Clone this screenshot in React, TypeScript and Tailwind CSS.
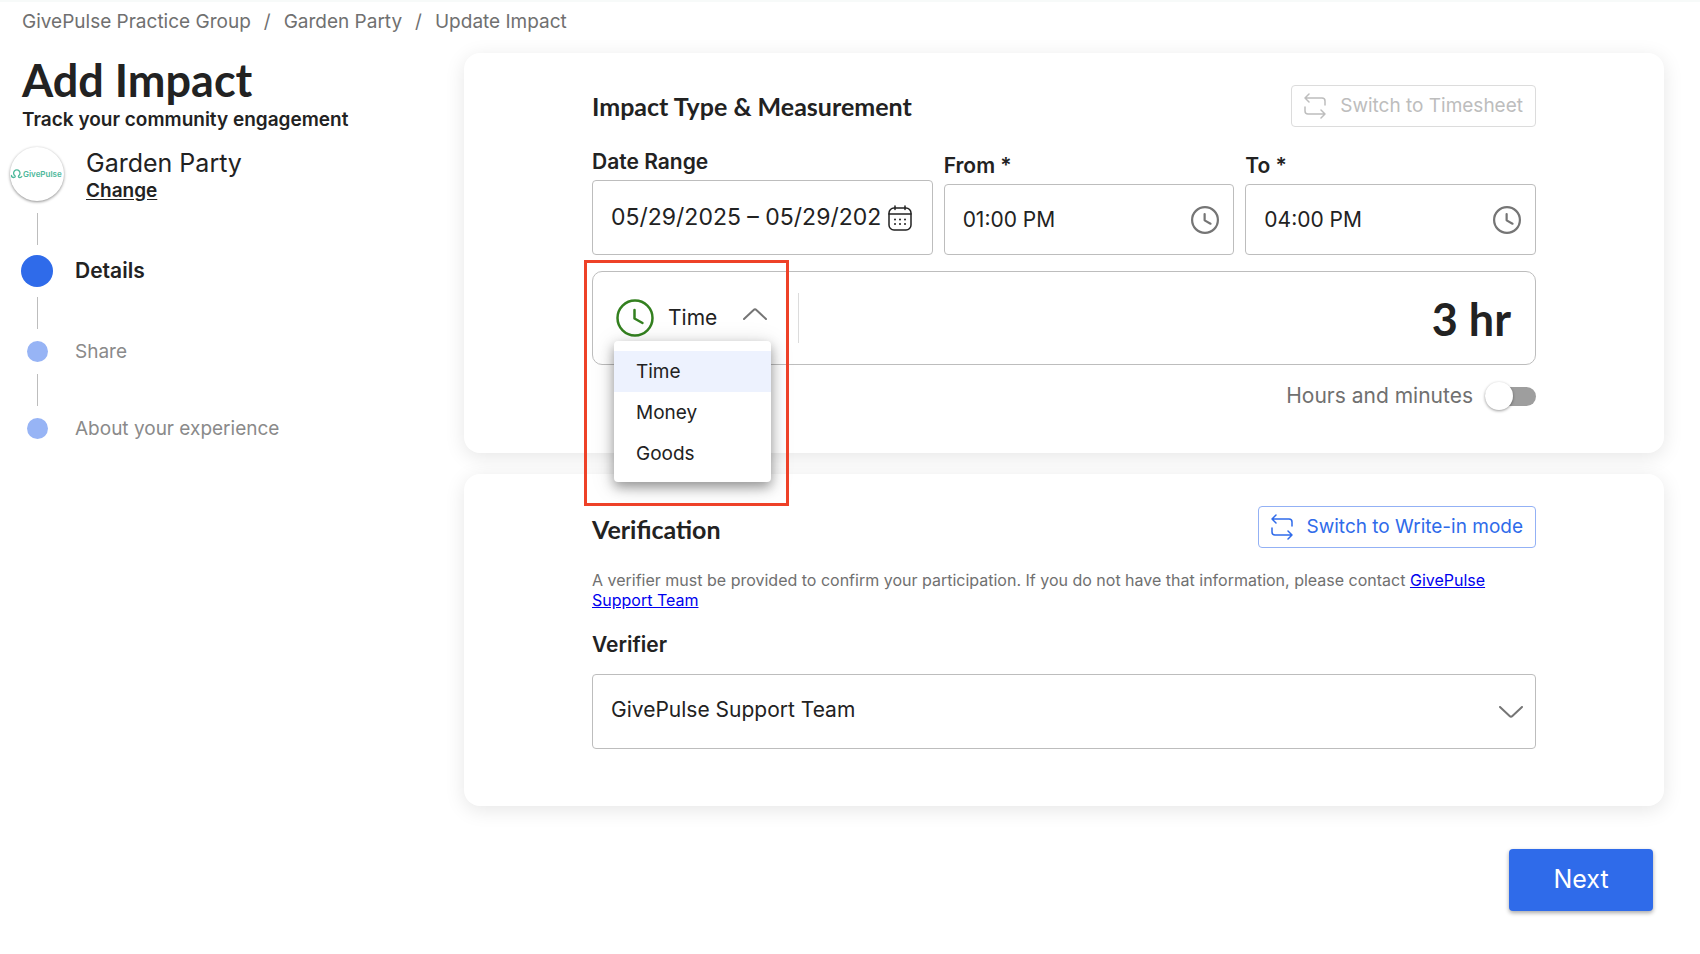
import { useState } from "react";
import type { ReactNode } from "react";
import clsx from "clsx";

const impactTypes = ["Time", "Money", "Goods"];

const steps = [
    { label: "Details", active: true },
    { label: "Share", active: false },
    { label: "About your experience", active: false },
];

function SwapIcon() {
    return (
        <svg width="22" height="26" viewBox="0 0 22 26" fill="none" stroke="currentColor" strokeWidth="1.5" strokeLinecap="round" strokeLinejoin="round">
            <path d="M5 1 1 5l4 4M1 5h17a3 3 0 0 1 3 3v4" />
            <path d="m17 17 4 4-4 4M21 21H4a3 3 0 0 1-3-3v-4" />
        </svg>
    );
}

function ClockIcon({ className, stroke }: { className: string; stroke: number }) {
    return (
        <svg className={className} viewBox="0 0 38 38" fill="none" stroke="currentColor" strokeWidth={stroke} strokeLinecap="round" strokeLinejoin="round">
            <circle cx="19" cy="19" r="17.500" />
            <path d="M18.500 11v8.500l8 4.500" />
        </svg>
    );
}

function CalendarIcon() {
    return (
        <svg width="24" height="26" viewBox="0 0 24 26" fill="none" stroke="currentColor" strokeWidth="1.500" strokeLinecap="round">
            <rect x="1" y="3" width="22" height="22" rx="5" />
            <path d="M1 9h22M7 1v3.500M17 1v3.500" />
            <path d="M7 14.500h.01M12 14.500h.01M17 14.500h.01M7 19h.01M12 19h.01M17 19h.01" strokeWidth="2" />
        </svg>
    );
}

function Chevron({ up = false }: { up?: boolean }) {
    return (
        <svg width="24" height="12" viewBox="0 0 24 12" fill="none" stroke="currentColor" strokeWidth="2" strokeLinecap="round" className={up ? "rotate-180" : ""}>
            <path d="m1 1 9.600 9a2 2 0 0 0 2.800 0L23 1" />
        </svg>
    );
}

function GroupLogo() {
    return (
        <svg width="54" height="54" viewBox="0 0 54 54" role="img" aria-label="GivePulse">
            <path d="M1.500 28.500c0 1.600 1.200 2 2.300 2 1.400 0 1.700-.8 1.200-1.700a3.200 3.200 0 1 1 3.600 0c-.5 1 0 1.700 1.200 1.700 1 0 1.700-.4 2-1" fill="none" stroke="#4db89b" strokeWidth="1.300" strokeLinecap="round" />
            <text x="13" y="30" fontSize="8" fontWeight="600" fill="#4db89b">GivePulse</text>
        </svg>
    );
}

function Card({ children, className }: { children: ReactNode; className: string }) {
    return (
        <section className={clsx("rounded-2xl bg-white px-32 shadow-[0_4px_20px_rgba(0,0,0,0.1)]", className)}>
            {children}
        </section>
    );
}

function SwitchButton({ children, disabled = false }: { children: ReactNode; disabled?: boolean }) {
    return (
        <button
            type="button"
            disabled={disabled}
            className={clsx(
                "flex h-[42px] items-center gap-3.5 rounded border px-3 text-[19px]",
                disabled ? "border-[#dcdcdc] text-[#bdbdbd]" : "border-[#93b1f5] text-[#2f6bea]"
            )}
        >
            <SwapIcon />
            {children}
        </button>
    );
}

function TimeField({ id, label, value }: { id: string; label: string; value: string }) {
    return (
        <div className="min-w-0 flex-[291]">
            <label htmlFor={id} className="block pb-1 text-[21px] font-semibold leading-7">{label} *</label>
            <div className="flex h-[71px] items-center rounded border border-[#bdbdbd] pl-[18px] pr-3.5">
                <input id={id} defaultValue={value} className="min-w-0 flex-1 text-[21px] outline-none" />
                <button type="button" aria-label={"Choose time: " + label} className="text-[#757575]">
                    <ClockIcon className="size-7" stroke={3} />
                </button>
            </div>
        </div>
    );
}

function Sidebar() {
    return (
        <aside className="w-[464px] shrink-0">
            <h1 className="pl-[22px] font-['Lato'] text-[45px] font-bold leading-[55px]">Add Impact</h1>
            <p className="pl-[22px] text-[19px] font-semibold leading-6">Track your community engagement</p>

            <div className="flex gap-[22px] pl-2.5 pt-[15px]">
                <div className="size-[54px] shrink-0 overflow-hidden rounded-full bg-white shadow-[0_1px_3px_rgba(0,0,0,0.45)]">
                    <GroupLogo />
                </div>
                <div>
                    <p className="text-[25px] leading-8">Garden Party</p>
                    <a href="#" className="block text-[19px] font-semibold leading-6 underline underline-offset-2">Change</a>
                </div>
            </div>

            <ol className="pl-[21px]">
                {steps.map((step) => (
                    <li key={step.label}>
                        <div className="my-2.5 ml-4 h-8 w-px bg-[#bdbdbd]" />
                        <div className="flex items-center gap-[22px]">
                            <span className={clsx("flex w-8 items-center justify-center", step.active ? "h-8" : "h-[25px]")}>
                                <span className={clsx("rounded-full", step.active ? "size-8 bg-[#2f6bea]" : "size-[21px] bg-[#97b4f5]")} />
                            </span>
                            <span className={clsx("leading-6", step.active ? "text-[21px] font-semibold" : "text-[19px] text-[#8a8a8a]")}>{step.label}</span>
                        </div>
                    </li>
                ))}
            </ol>
        </aside>
    );
}

export default function App() {
    const [type, setType] = useState("Time");

    return (
        <div className="bg-white font-['Inter',sans-serif] text-[#222]">
            <nav aria-label="Breadcrumb" className="border-t-2 border-[#f7faf9] pl-[22px] pt-2">
                <ol className="flex gap-[13px] text-[19px] leading-6 text-[#707070]">
                    <li><a href="#">GivePulse Practice Group</a></li>
                    <li aria-hidden="true">/</li>
                    <li><a href="#">Garden Party</a></li>
                    <li aria-hidden="true">/</li>
                    <li>Update Impact</li>
                </ol>
            </nav>

            <div className="flex pt-[19px] pr-9">
                <Sidebar />

                <main className="min-w-0 flex-1">
                    <Card className="pt-8 pb-10">
                        <div className="flex items-center justify-between">
                            <h2 className="font-['Lato'] text-[25px] font-bold leading-8">Impact Type &amp; Measurement</h2>
                            <SwitchButton disabled>Switch to Timesheet</SwitchButton>
                        </div>

                        <div className="flex items-end gap-[11px] pt-[21px]">
                            <div className="min-w-0 flex-[341]">
                                <label htmlFor="dates" className="block pb-1 text-[21px] font-semibold leading-7">Date Range</label>
                                <div className="flex h-[75px] items-center gap-1.5 rounded border border-[#bdbdbd] pl-[18px] pr-5">
                                    <input id="dates" defaultValue="05/29/2025 – 05/29/2025" className="min-w-0 flex-1 text-[23px] outline-none" />
                                    <button type="button" aria-label="Choose dates"><CalendarIcon /></button>
                                </div>
                            </div>
                            <TimeField id="from" label="From" value="01:00 PM" />
                            <TimeField id="to" label="To" value="04:00 PM" />
                        </div>

                        <div className="relative mt-4 flex h-[94px] items-center justify-between rounded-[10px] border border-[#bdbdbd] pr-6">
                            <div className="flex h-[50px] w-[206px] items-center border-r border-[#dcdcdc] pl-[23px]">
                                <ClockIcon className="size-[38px] text-[#33801f]" stroke={2.5} />
                                <label className="relative ml-3.5 flex items-center text-[#757575]">
                                    <select
                                        aria-label="Impact type"
                                        value={type}
                                        onChange={(e) => setType(e.target.value)}
                                        className="w-[99px] appearance-none text-[21px] text-[#222] outline-none"
                                    >
                                        {impactTypes.map((t) => <option key={t}>{t}</option>)}
                                    </select>
                                    <span className="pointer-events-none absolute right-0 pb-2"><Chevron up /></span>
                                </label>
                            </div>
                            <output className="pt-1 font-['Lato'] text-[45px] font-bold">3 hr</output>

                            <ul role="listbox" aria-label="Impact type" className="absolute left-[21px] top-[69px] z-10 w-[157px] rounded bg-white pt-2.5 pb-2 text-[19px] shadow-[0_5px_12px_rgba(0,0,0,0.35),0_4px_24px_rgba(0,0,0,0.15)]">
                                {impactTypes.map((t) => (
                                    <li
                                        key={t}
                                        role="option"
                                        aria-selected={t === type}
                                        onClick={() => setType(t)}
                                        className={clsx("cursor-pointer px-[22px] leading-[41px]", t === type && "bg-[#edf2fe]")}
                                    >
                                        {t}
                                    </li>
                                ))}
                            </ul>
                            <div className="pointer-events-none absolute -left-[9px] -top-3 z-20 h-[246px] w-[205px] border-3 border-[#ee4128]" />
                        </div>

                        <label className="flex items-center justify-end gap-3 pt-[15px] pb-px text-[21px] leading-8 text-[#707070]">
                            Hours and minutes
                            <input type="checkbox" role="switch" className="peer sr-only" />
                            <span className="flex h-[19px] w-[51px] items-center rounded-full bg-[#9e9e9e] peer-checked:justify-end">
                                <span className="size-7 shrink-0 rounded-full bg-white shadow-[0_1px_3px_rgba(0,0,0,0.4)]" />
                            </span>
                        </label>
                    </Card>

                    <Card className="mt-[21px] pt-8 pb-[57px]">
                        <div className="flex items-center justify-between">
                            <h2 className="pt-1 font-['Lato'] text-[25px] font-bold leading-8">Verification</h2>
                            <SwitchButton>Switch to Write-in mode</SwitchButton>
                        </div>
                        <p className="pt-[22px] text-base leading-5 text-[#707070]">
                            A verifier must be provided to confirm your participation. If you do not have that information, please contact{" "}
                            <a href="#" className="text-[#0000ee] underline">GivePulse Support Team</a>
                        </p>
                        <label htmlFor="verifier" className="block pt-[21px] pb-[15px] text-[21px] font-semibold leading-7">Verifier</label>
                        <div className="relative flex items-center">
                            <select id="verifier" className="h-[75px] w-full appearance-none rounded border border-[#bdbdbd] pb-1 pl-[18px] text-[21px] outline-none">
                                <option>GivePulse Support Team</option>
                            </select>
                            <span className="pointer-events-none absolute right-[13px] text-[#757575]"><Chevron /></span>
                        </div>
                    </Card>

                    <div className="flex justify-end pt-[43px] pr-[11px] pb-10">
                        <button type="button" className="h-[62px] w-36 rounded bg-[#2f6bea] text-[25px] text-white shadow-[0_2px_4px_rgba(0,0,0,0.35)]">Next</button>
                    </div>
                </main>
            </div>
        </div>
    );
}
